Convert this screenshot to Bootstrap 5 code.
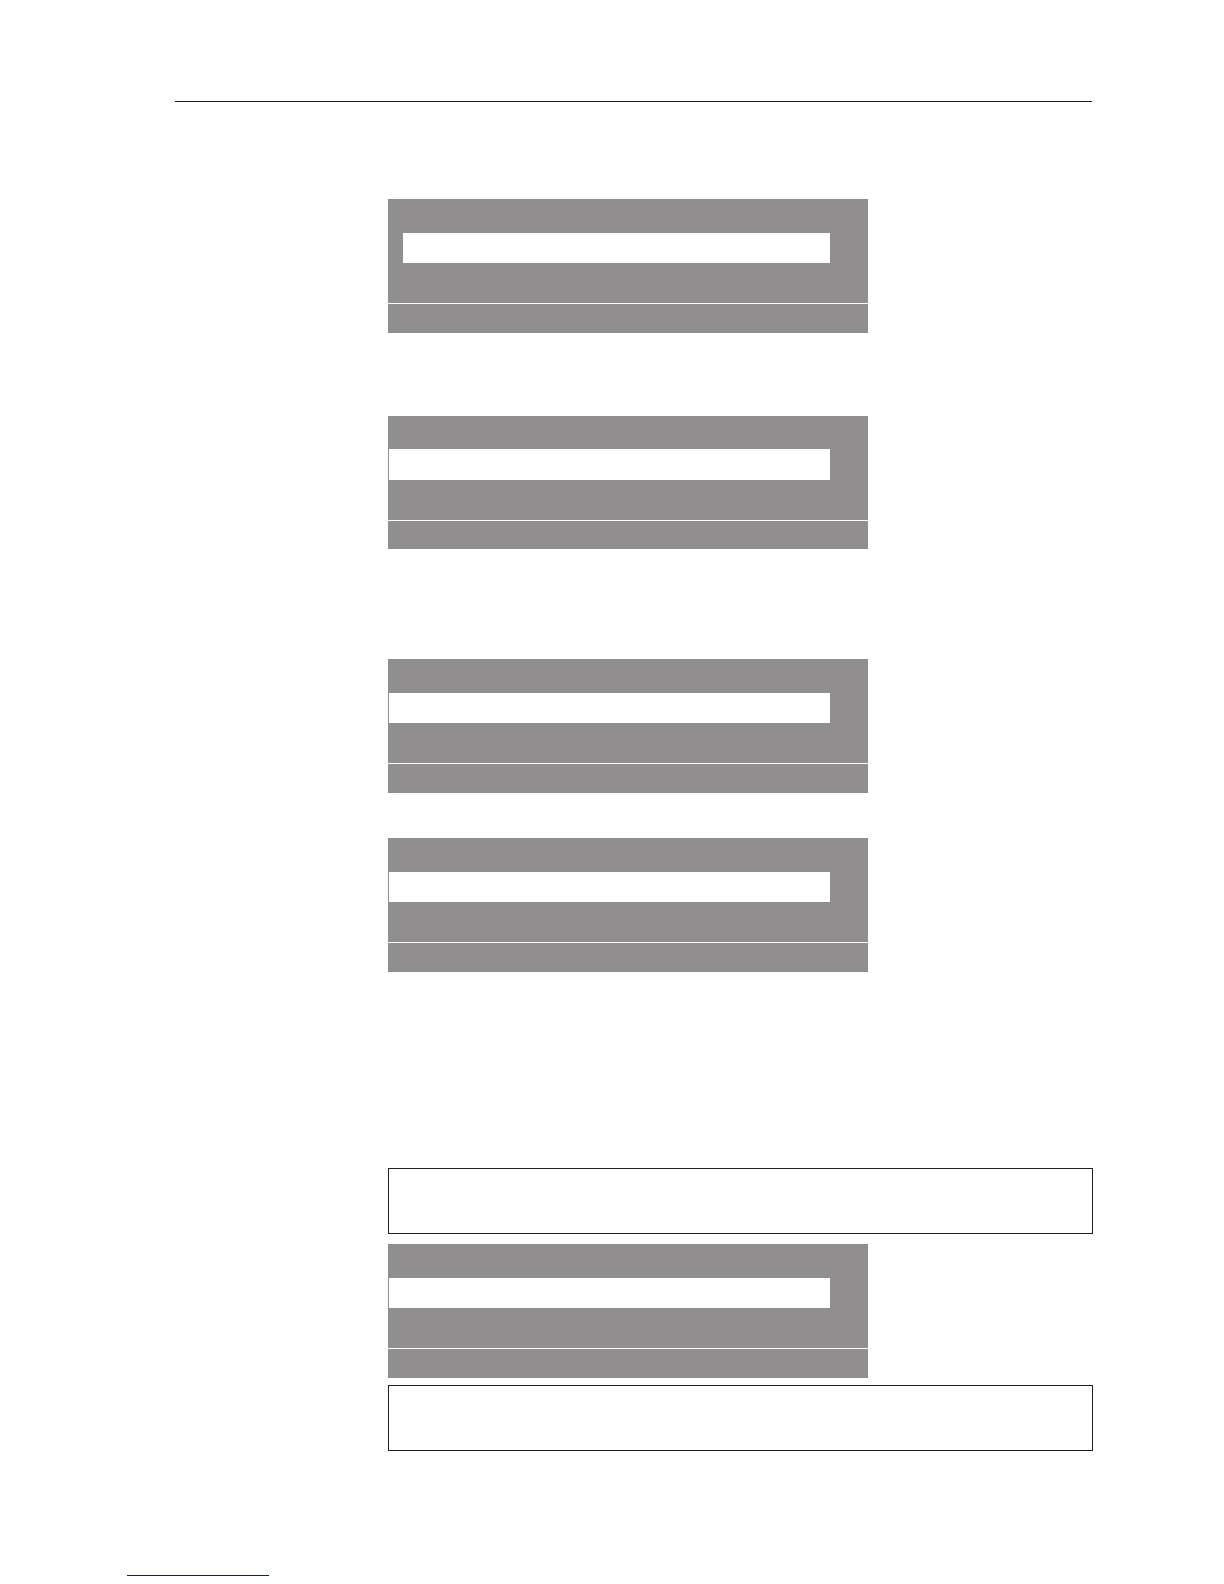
<!DOCTYPE html>
<html lang="en">
<head>
<meta charset="utf-8">
<meta name="viewport" content="width=device-width, initial-scale=1">
<title>Manual page</title>
<link rel="stylesheet" href="https://cdn.jsdelivr.net/npm/bootstrap@5.3.0/dist/css/bootstrap.min.css">
<style>
  body { font-family: "Liberation Sans", Arial, sans-serif; }
  .sheet { padding: 101px 131px 8px 127px; }
  .thin-rule { height: 1px; margin: 0; border: 0; opacity: 1; background: #231f20; }
  .head-rule { margin-left: 48px; margin-right: 1px; }
  .foot-rule { width: 142px; margin-top: 124px; background: #14148c; }
  .content-col { margin-left: 261px; padding-top: 97px; }
  /* display panel: title strip, selected line, body, footer strip */
  .screen { max-width: 480px; }
  .screen > div { background: #908e8f; }
  .screen .strip-top { height: 34px; }
  .screen .strip-sel { height: 30px; padding: 0 38px 0 1px; }
  .screen .strip-body { height: 40px; }
  .screen .strip-foot { height: 29px; margin-top: 1px; }
  .screen-indent .strip-sel { padding-left: 15px; }
  .screen-short .strip-top { height: 33px; }
  .screen-short .strip-sel { height: 31px; }
  .screen-short .strip-foot { height: 28px; }
  .note-box { height: 66px; border: 1px solid #231f20; }
  .gap-step { margin-top: 83px; }
  .gap-section { margin-top: 110px; }
  .gap-line { margin-top: 45px; }
  .gap-chapter { margin-top: 196px; }
  .gap-note { margin-top: 10px; }
  .gap-tight { margin-top: 7px; }
</style>
</head>
<body class="bg-white">
<div class="sheet">
  <header><hr class="thin-rule head-rule"></header>
  <main class="content-col d-flex flex-column">
    <section class="screen screen-indent w-100">
      <div class="strip-top"></div>
      <div class="strip-sel"><div class="bg-white h-100"></div></div>
      <div class="strip-body"></div>
      <div class="strip-foot"></div>
    </section>
    <section class="screen screen-short w-100 gap-step">
      <div class="strip-top"></div>
      <div class="strip-sel"><div class="bg-white h-100"></div></div>
      <div class="strip-body"></div>
      <div class="strip-foot"></div>
    </section>
    <section class="screen w-100 gap-section">
      <div class="strip-top"></div>
      <div class="strip-sel"><div class="bg-white h-100"></div></div>
      <div class="strip-body"></div>
      <div class="strip-foot"></div>
    </section>
    <section class="screen w-100 gap-line">
      <div class="strip-top"></div>
      <div class="strip-sel"><div class="bg-white h-100"></div></div>
      <div class="strip-body"></div>
      <div class="strip-foot"></div>
    </section>
    <aside class="note-box gap-chapter"></aside>
    <section class="screen w-100 gap-note">
      <div class="strip-top"></div>
      <div class="strip-sel"><div class="bg-white h-100"></div></div>
      <div class="strip-body"></div>
      <div class="strip-foot"></div>
    </section>
    <aside class="note-box gap-tight"></aside>
  </main>
  <footer><hr class="thin-rule foot-rule"></footer>
</div>
<script src="https://cdn.jsdelivr.net/npm/bootstrap@5.3.0/dist/js/bootstrap.bundle.min.js"></script>
</body>
</html>
